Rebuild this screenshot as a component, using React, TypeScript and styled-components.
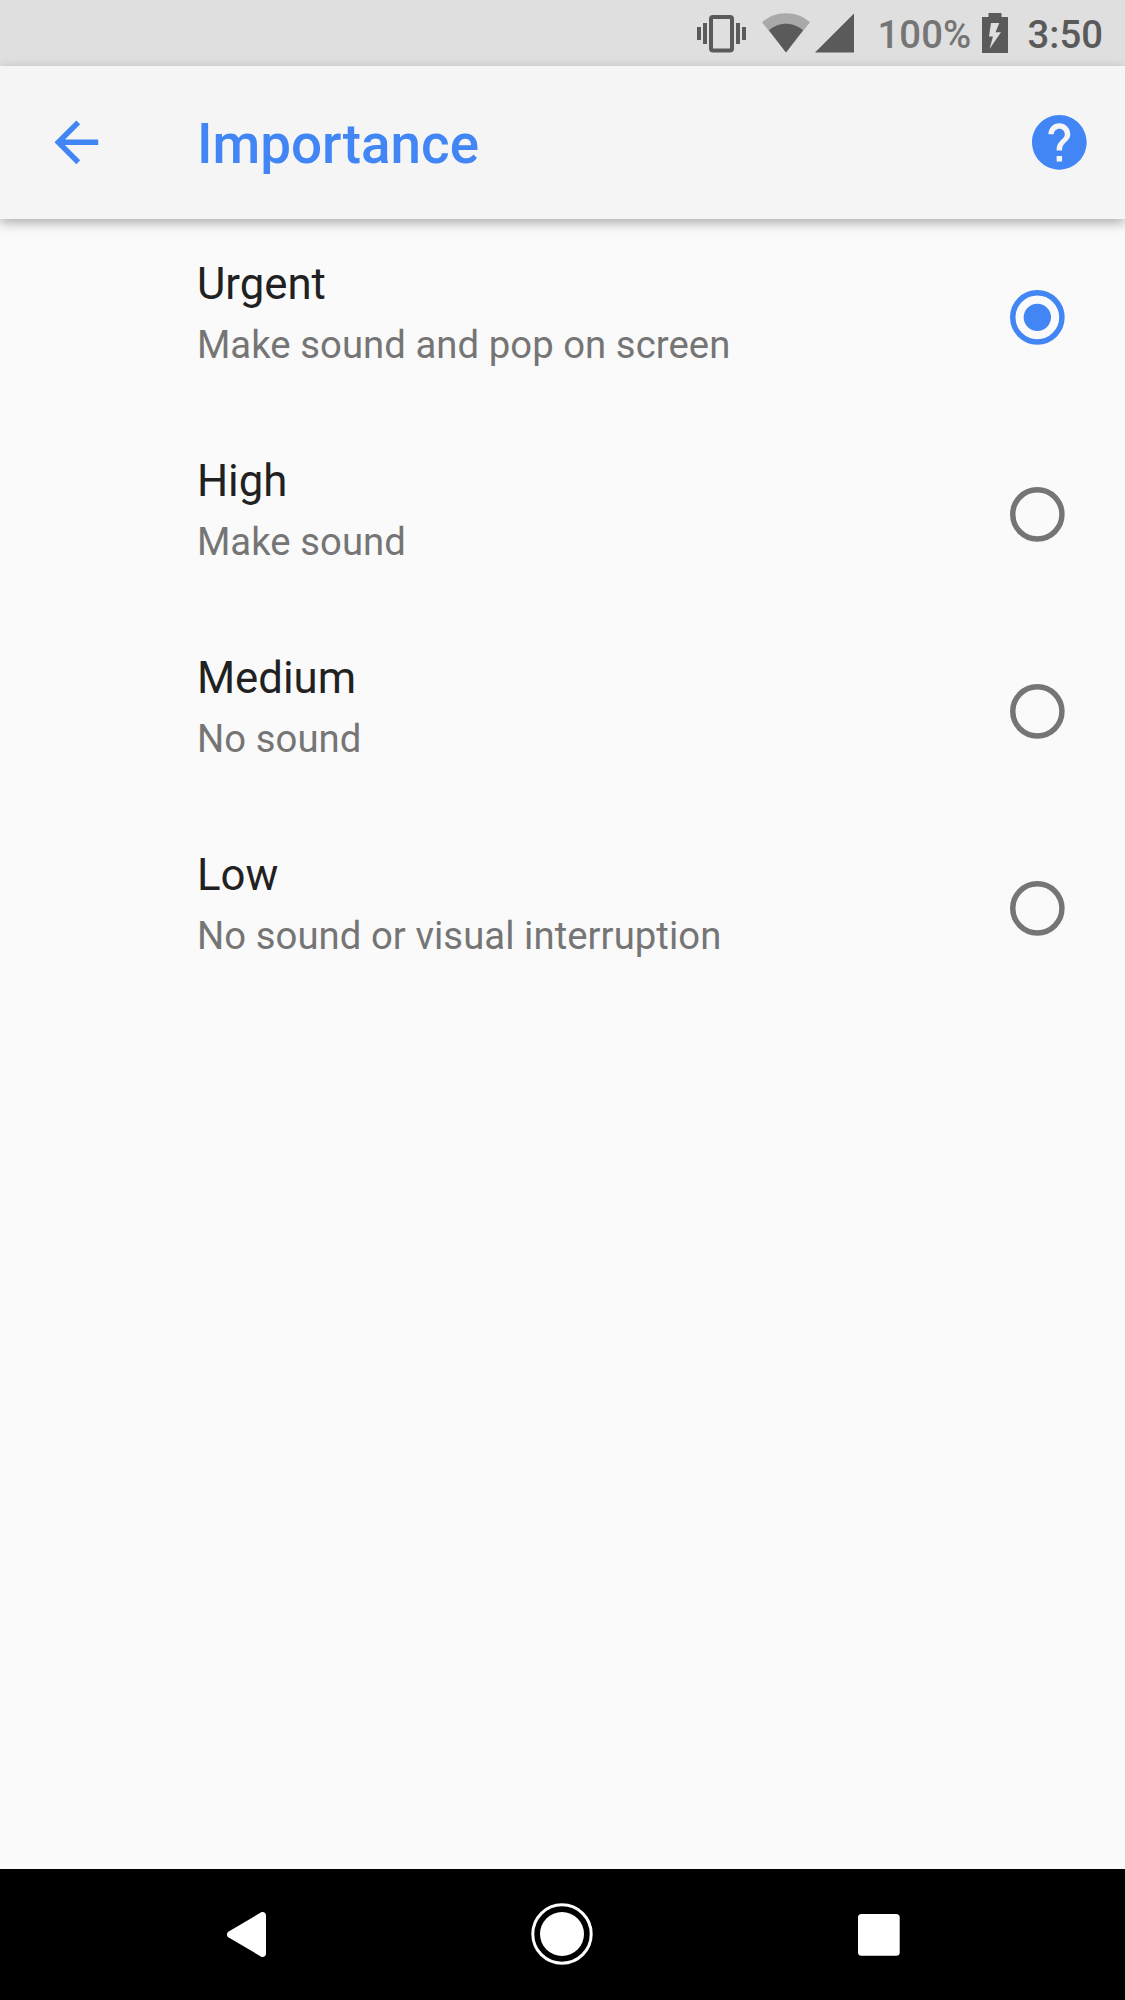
import React, { useState } from 'react';
import styled, { createGlobalStyle } from 'styled-components';

const GlobalStyle = createGlobalStyle`
  *, *::before, *::after { box-sizing: border-box; }
  body {
    margin: 0;
    background: #fafafa;
    font-family: Roboto, 'Noto Sans', sans-serif;
  }
`;

const Screen = styled.div`
  display: flex;
  flex-direction: column;
  width: 1125px;
  height: 2000px;
  overflow: hidden;
  background: #fafafa;
`;

const StatusBar = styled.div`
  display: flex;
  flex: none;
  align-items: center;
  justify-content: flex-end;
  height: 65.6px;
  padding-right: 22px;
  background: #dfdfdf;
  color: #5a5a5a;
`;

const StatusIcon = styled.svg<{ $gap: number }>`
  display: block;
  flex: none;
  margin-right: ${(p) => p.$gap}px;
`;

const StatusText = styled.span<{ $color: string; $gap?: number }>`
  margin-right: ${(p) => p.$gap ?? 0}px;
  padding-top: 3px;
  color: ${(p) => p.$color};
  font-size: 38.3px;
  font-weight: 500;
  line-height: 45px;
`;

const AppBar = styled.header`
  display: flex;
  position: relative;
  flex: none;
  align-items: center;
  height: 153.1px;
  padding: 0 33px 0 43px;
  background: #f5f5f5;
  color: #4285f4;
  box-shadow: 0 4px 11px rgba(0, 0, 0, 0.31);
`;

const IconButton = styled.button`
  display: block;
  flex: none;
  padding: 0;
  border: 0;
  background: none;
  color: inherit;
`;

const Glyph = styled.svg.attrs({ viewBox: '-0.2 -0.2 24.15 24.15' })`
  display: block;
  width: 66px;
  height: 66px;
  fill: currentColor;
`;

const Title = styled.h1`
  flex: 1;
  margin: 0;
  padding: 4px 0 0 87.9px;
  font-size: 54.8px;
  font-weight: 500;
  line-height: 64px;
`;

const List = styled.main`
  flex: 1;
`;

const Row = styled.div`
  display: flex;
  align-items: center;
  height: 196.87px;
  padding: 0 55px 0 196.9px;
  cursor: pointer;
`;

const Labels = styled.div`
  display: flex;
  flex: 1;
  flex-direction: column;
  gap: 12px;
  padding-bottom: 7px;
`;

const Name = styled.div`
  color: #212121;
  font-size: 43.75px;
  line-height: 51px;
`;

const Summary = styled.div`
  color: #757575;
  font-size: 38.28px;
  letter-spacing: 0.06px;
  line-height: 46px;
`;

const Radio = styled(Glyph)<{ $on: boolean }>`
  color: ${(p) => (p.$on ? '#4285f4' : '#757575')};
`;

const NavBar = styled.nav`
  display: flex;
  flex: none;
  justify-content: center;
  height: 131.3px;
  background: #000;
`;

const NavButton = styled.button`
  display: flex;
  align-items: center;
  justify-content: center;
  width: 316.4px;
  padding: 0;
  border: 0;
  background: none;
`;

const levels = [
  { name: 'Urgent', summary: 'Make sound and pop on screen' },
  { name: 'High', summary: 'Make sound' },
  { name: 'Medium', summary: 'No sound' },
  { name: 'Low', summary: 'No sound or visual interruption' },
];

export default function App() {
  const [selected, setSelected] = useState('Urgent');
  return (
    <Screen>
      <GlobalStyle />
      <StatusBar>
        <StatusIcon $gap={16} width="49" height="40" viewBox="0 0 49 40" fill="currentColor">
          <path d="M0 14h4v13H0zM6 10h4v21H6zM39 10h4v21h-4zM45 14h4v13h-4z" />
          <rect x="14" y="4" width="21" height="33.5" rx="2" fill="none" stroke="currentColor" strokeWidth="4" />
        </StatusIcon>
        <StatusIcon $gap={5} width="48" height="40" viewBox="0 0 48 40">
          <path d="M24 39.5 0 9.2C6.5 3.6 15 .3 24 .3s17.500 3.300 24 8.900z" fill="#a9a9a9" />
          <path d="M24 39.500 7 17.200c4.700-4 10.500-6.500 17-6.500s12.300 2.500 17 6.500z" fill="currentColor" />
        </StatusIcon>
        <StatusIcon $gap={24} width="39" height="40" viewBox="0 0 39 40">
          <path d="M39 .5v39H0z" fill="currentColor" />
        </StatusIcon>
        <StatusText $color="#757575" $gap={11}>100%</StatusText>
        <StatusIcon $gap={19.5} width="26" height="40" viewBox="0 0 26 40">
          <path d="M6.500 0h13v4H26v36H0V4h6.500zM9 10 7 23.500h4L7.500 36 19 19.300h-5.500l3.800-9.300z" fill="currentColor" fillRule="evenodd" />
        </StatusIcon>
        <StatusText $color="#5a5a5a">3:50</StatusText>
      </StatusBar>

      <AppBar>
        <IconButton aria-label="Back">
          <Glyph>
            <path d="M20 11H7.830l5.590-5.590L12 4l-8 8 8 8 1.410-1.410L7.830 13H20v-2z" />
          </Glyph>
        </IconButton>
        <Title>Importance</Title>
        <IconButton aria-label="Help">
          <Glyph>
            <path d="M12 2C6.480 2 2 6.480 2 12s4.480 10 10 10 10-4.480 10-10S17.520 2 12 2zm1 17h-2v-2h2v2zm2.070-7.750l-.9.920C13.450 12.900 13 13.500 13 15h-2v-.5c0-1.100.45-2.100 1.170-2.830l1.240-1.260c.37-.36.59-.86.59-1.410 0-1.100-.9-2-2-2s-2 .9-2 2H8c0-2.210 1.790-4 4-4s4 1.790 4 4c0 .88-.36 1.680-.93 2.250z" />
          </Glyph>
        </IconButton>
      </AppBar>

      <List role="radiogroup">
        {levels.map((level) => {
          const on = level.name === selected;
          return (
            <Row key={level.name} role="radio" aria-checked={on} onClick={() => setSelected(level.name)}>
              <Labels>
                <Name>{level.name}</Name>
                <Summary>{level.summary}</Summary>
              </Labels>
              <Radio $on={on}>
                <circle cx="12" cy="12" r="9" fill="none" stroke="currentColor" strokeWidth="2" />
                {on && <circle cx="12" cy="12" r="5" />}
              </Radio>
            </Row>
          );
        })}
      </List>

      <NavBar>
        <NavButton aria-label="Back">
          <svg width="39" height="45" viewBox="0 0 39 45" fill="#fff">
            <path d="M33.800.6C36.300-.8 39 .8 39 3.500v38c0 2.700-2.700 4.300-5.200 2.900L1.700 25.500c-2.300-1.400-2.300-4.600 0-6z" />
          </svg>
        </NavButton>
        <NavButton aria-label="Home">
          <svg width="62" height="62" viewBox="0 0 62 62">
            <circle cx="31" cy="31" r="29.200" fill="none" stroke="#fff" strokeWidth="3" />
            <circle cx="31" cy="31" r="22" fill="#fff" />
          </svg>
        </NavButton>
        <NavButton aria-label="Overview">
          <svg width="43" height="43" viewBox="0 0 43 43">
            <rect x="1" y="1" width="41.700" height="41.700" rx="3.500" fill="#fff" />
          </svg>
        </NavButton>
      </NavBar>
    </Screen>
  );
}
